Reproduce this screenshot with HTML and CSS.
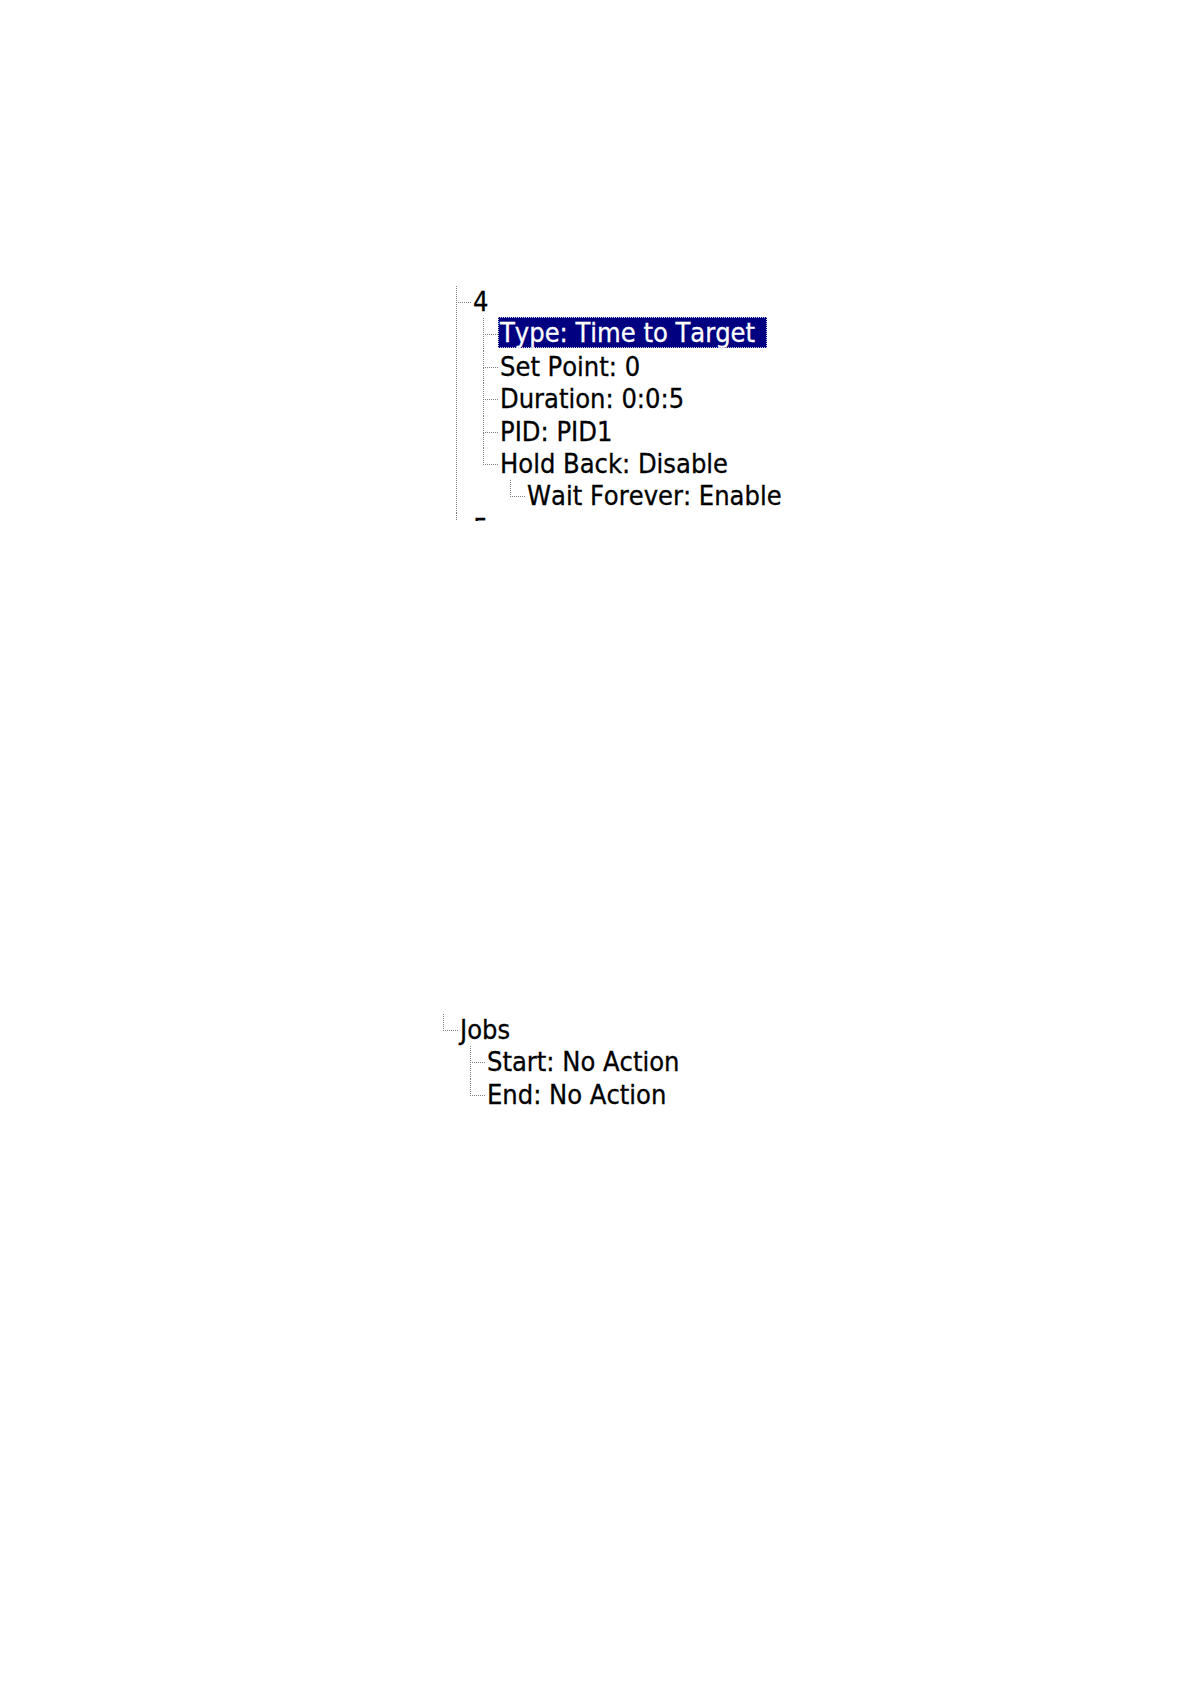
FILE: index.html
```html
<!DOCTYPE html>
<html>
<head>
<meta charset="utf-8">
<link rel="stylesheet" href="styles.css">
</head>
<body>
<div class="page">
  <div class="shot shot-steps">
    <ul class="tree tree-open">
      <li><span class="label">4</span>
        <ul class="tree">
          <li><span class="label sel">Type: Time to Target</span></li>
          <li><span class="label">Set Point: 0</span></li>
          <li><span class="label">Duration: 0:0:5</span></li>
          <li><span class="label">PID: PID1</span></li>
          <li><span class="label">Hold Back: Disable</span>
            <ul class="tree">
              <li><span class="label">Wait Forever: Enable</span></li>
            </ul>
          </li>
        </ul>
      </li>
      <li><span class="label">5</span></li>
    </ul>
  </div>
  <div class="shot shot-jobs">
    <ul class="tree">
      <li><span class="label">Jobs</span>
        <ul class="tree">
          <li><span class="label">Start: No Action</span></li>
          <li><span class="label">End: No Action</span></li>
        </ul>
      </li>
    </ul>
  </div>
</div>
</body>
</html>
```
FILE: styles.css
```css
html, body {
  margin: 0;
  padding: 0;
  background: #ffffff;
}

.page {
  width: 1190px;
  min-height: 1684px;
  font-family: "DejaVu Sans Condensed", "DejaVu Sans", "Liberation Sans", sans-serif;
  font-stretch: condensed;
  font-size: 27px;
  font-kerning: none;
  color: #000000;
  -webkit-text-stroke: 0.3px currentColor;
  overflow: hidden;
}

.shot {
  overflow: hidden;
}

.shot-steps {
  margin: 286px 0 0 456px;
  height: 235px;
  width: 400px;
}

.shot-jobs {
  margin: 493px 0 0 443px;
  height: 100px;
  width: 300px;
}

.tree {
  list-style: none;
  margin: 0;
  padding: 0;
}

.tree .tree {
  margin-left: 10px;
}

.tree li {
  position: relative;
  padding-left: 17px;
  line-height: 32.4px;
  white-space: nowrap;
}

.tree li::before {
  content: "";
  position: absolute;
  left: 0;
  top: 0;
  width: 14px;
  height: 16px;
  border-left: 1px dotted #808080;
  border-bottom: 1px dotted #808080;
}

.tree li::after {
  content: "";
  position: absolute;
  left: 0;
  top: 16px;
  bottom: 0;
  border-left: 1px dotted #808080;
}

.tree li:last-child::after {
  display: none;
}

.tree-open > li:last-child::after {
  display: block;
}

.label {
  display: inline-block;
}

.sel {
  background: #000080;
  color: #ffffff;
  margin-left: -2px;
  padding: 0 12px 0 2px;
  line-height: 31px;
  outline: 1px dotted #c8c8e0;
  outline-offset: -1px;
  position: relative;
  top: -1px;
}
```
